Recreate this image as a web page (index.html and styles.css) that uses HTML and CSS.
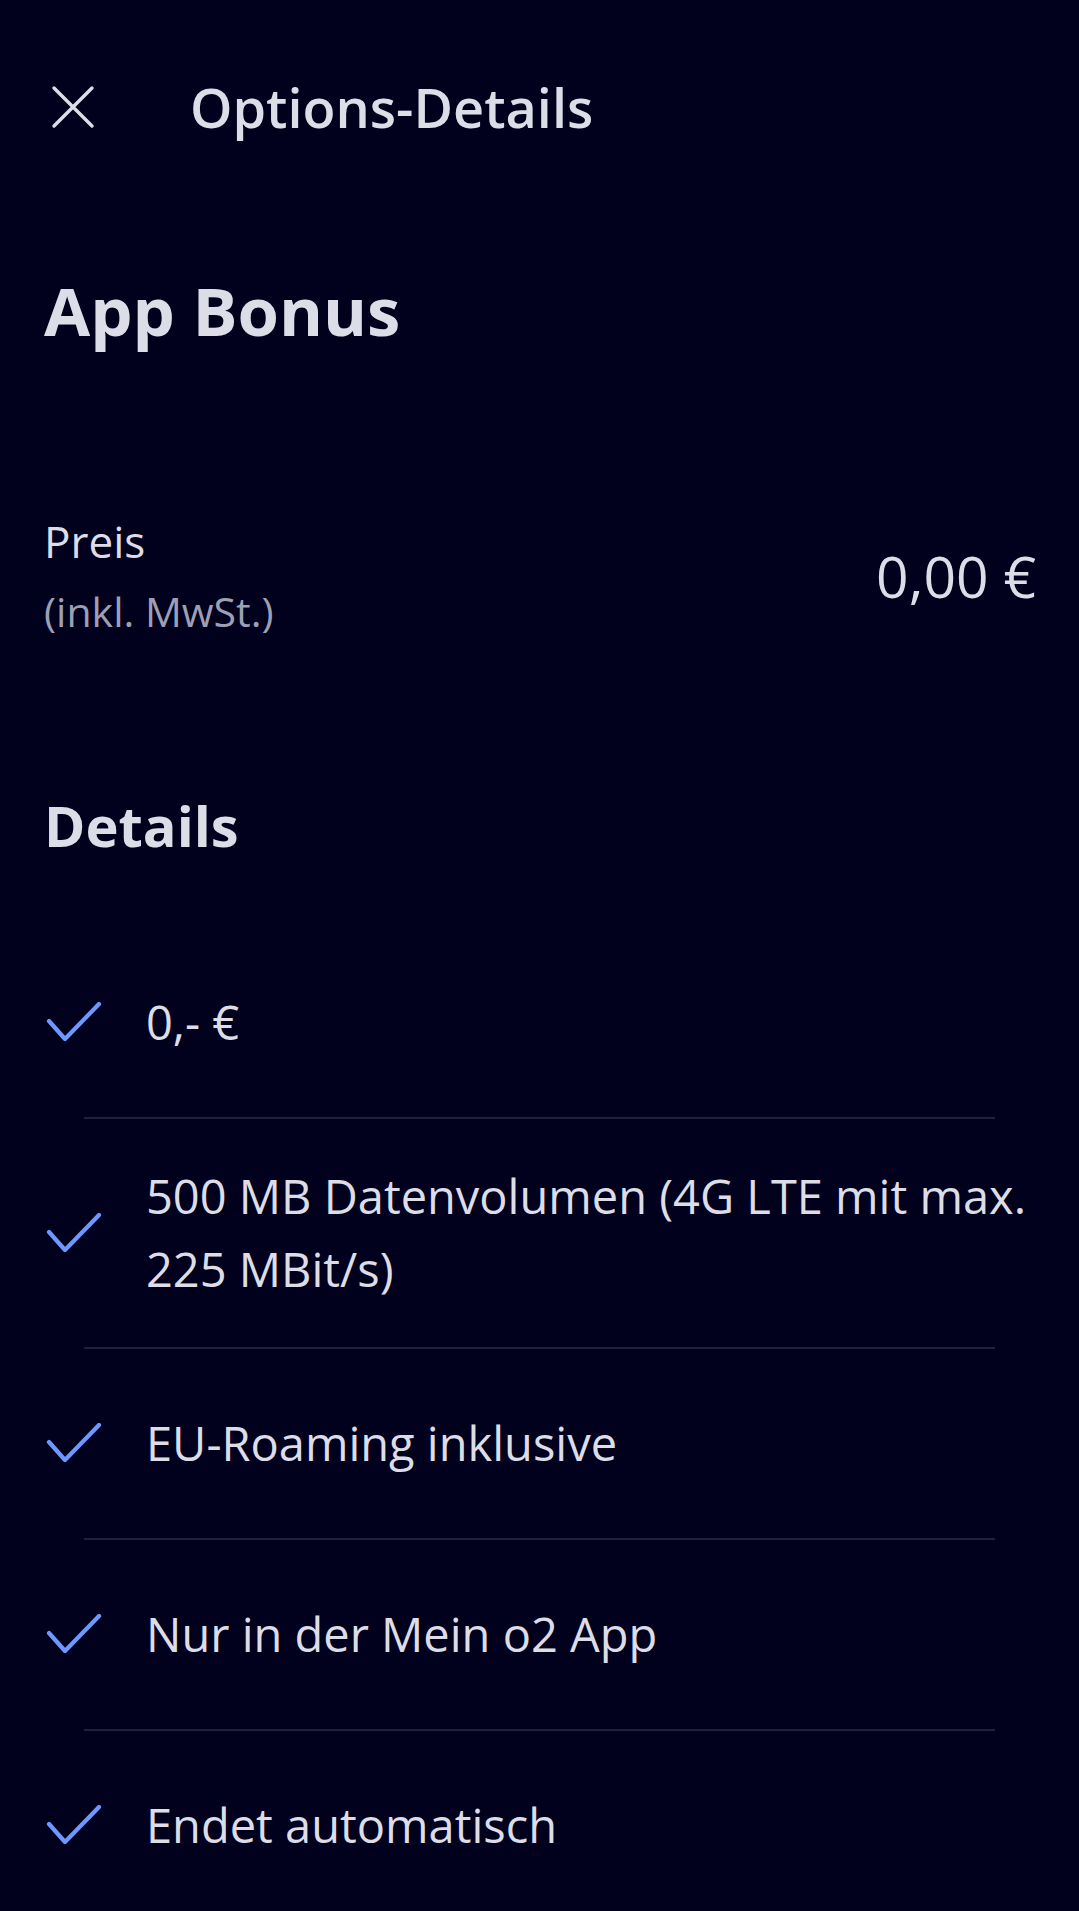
FILE: index.html
```html
<!doctype html>
<html lang="de">
    <head>
        <meta charset="utf-8">
        <meta name="viewport" content="width=device-width,initial-scale=1.0">
        <title>Options-Details</title>
        <link rel="stylesheet" href="styles.css">
    </head>
    <body>
        <header class="topbar">
            <button class="close-btn" aria-label="Schließen">
                <svg width="44" height="44" viewBox="0 0 44 44">
                    <path d="M3 3 L41 41 M41 3 L3 41" stroke="#dcdde6" stroke-width="3.4" stroke-linecap="round" fill="none"/>
                </svg>
            </button>
            <h1 class="topbar-title">Options-Details</h1>
        </header>

        <main class="content">
            <h2 class="option-name">App Bonus</h2>

            <section class="price-row">
                <div class="price-label">
                    <div class="price-title">Preis</div>
                    <div class="price-note">(inkl. MwSt.)</div>
                </div>
                <div class="price-value">0,00 €</div>
            </section>

            <h3 class="section-title">Details</h3>

            <div class="detail-list">
                <div class="detail-item">
                    <span class="check"><svg width="56" height="40" viewBox="0 0 56 40"><path d="M3 19 L19 37 L53 2" stroke="#6e98ff" stroke-width="4.2" stroke-linecap="round" stroke-linejoin="round" fill="none"/></svg></span>
                    <span class="detail-text">0,- €</span>
                </div>
                <div class="rule"></div>
                <div class="detail-item">
                    <span class="check"><svg width="56" height="40" viewBox="0 0 56 40"><path d="M3 19 L19 37 L53 2" stroke="#6e98ff" stroke-width="4.2" stroke-linecap="round" stroke-linejoin="round" fill="none"/></svg></span>
                    <span class="detail-text">500 MB Datenvolumen (4G LTE mit max. 225 MBit/s)</span>
                </div>
                <div class="rule"></div>
                <div class="detail-item">
                    <span class="check"><svg width="56" height="40" viewBox="0 0 56 40"><path d="M3 19 L19 37 L53 2" stroke="#6e98ff" stroke-width="4.2" stroke-linecap="round" stroke-linejoin="round" fill="none"/></svg></span>
                    <span class="detail-text">EU-Roaming inklusive</span>
                </div>
                <div class="rule"></div>
                <div class="detail-item">
                    <span class="check"><svg width="56" height="40" viewBox="0 0 56 40"><path d="M3 19 L19 37 L53 2" stroke="#6e98ff" stroke-width="4.2" stroke-linecap="round" stroke-linejoin="round" fill="none"/></svg></span>
                    <span class="detail-text">Nur in der Mein o2 App</span>
                </div>
                <div class="rule"></div>
                <div class="detail-item">
                    <span class="check"><svg width="56" height="40" viewBox="0 0 56 40"><path d="M3 19 L19 37 L53 2" stroke="#6e98ff" stroke-width="4.2" stroke-linecap="round" stroke-linejoin="round" fill="none"/></svg></span>
                    <span class="detail-text">Endet automatisch</span>
                </div>
            </div>
        </main>
    </body>
</html>
```

FILE: styles.css
```css
*{
    margin: 0;
    padding: 0;
    box-sizing: border-box;
}
html,body{
    background-color: #01011e;
}
body{
    font-family: "Open Sans", "Noto Sans", sans-serif;
    color: #dcdde6;
    overflow: hidden;
}

/* Kopfzeile */
.topbar{
    height: 214px;
    display: flex;
    align-items: center;
    padding-left: 51px;
}
.close-btn{
    width: 44px;
    height: 44px;
    background: none;
    border: none;
    display: flex;
}
.topbar-title{
    margin-left: 95px;
    font-size: 54px;
    font-weight: 600;
    line-height: 1.2;
}

.content{
    padding: 0 43px 0 44px;
}
.option-name{
    margin-top: 56px;
    font-size: 67px;
    font-weight: 700;
    line-height: 1.2;
}

/* Preis */
.price-row{
    margin-top: 163px;
    display: flex;
    justify-content: space-between;
    align-items: center;
}
.price-title{
    font-size: 44px;
    line-height: 56px;
}
.price-note{
    margin-top: 14px;
    font-size: 41px;
    line-height: 56px;
    color: #9d9fb3;
}
.price-value{
    font-size: 57px;
    font-weight: 500;
    line-height: 1.2;
}

.section-title{
    margin-top: 153px;
    font-size: 56px;
    font-weight: 700;
    line-height: 1.2;
}

/* Liste */
.detail-list{
    margin-top: 68px;
    display: flex;
    flex-direction: column;
}
.detail-item{
    min-height: 189px;
    padding: 41px 0 41px 2px;
    display: flex;
    align-items: center;
    gap: 44px;
}
.check{
    flex: none;
    width: 56px;
    height: 40px;
    display: flex;
}
.detail-text{
    font-size: 47px;
    line-height: 73px;
}
.rule{
    height: 2px;
    margin: 0 41px 0 40px;
    background-color: #20203b;
}
```
